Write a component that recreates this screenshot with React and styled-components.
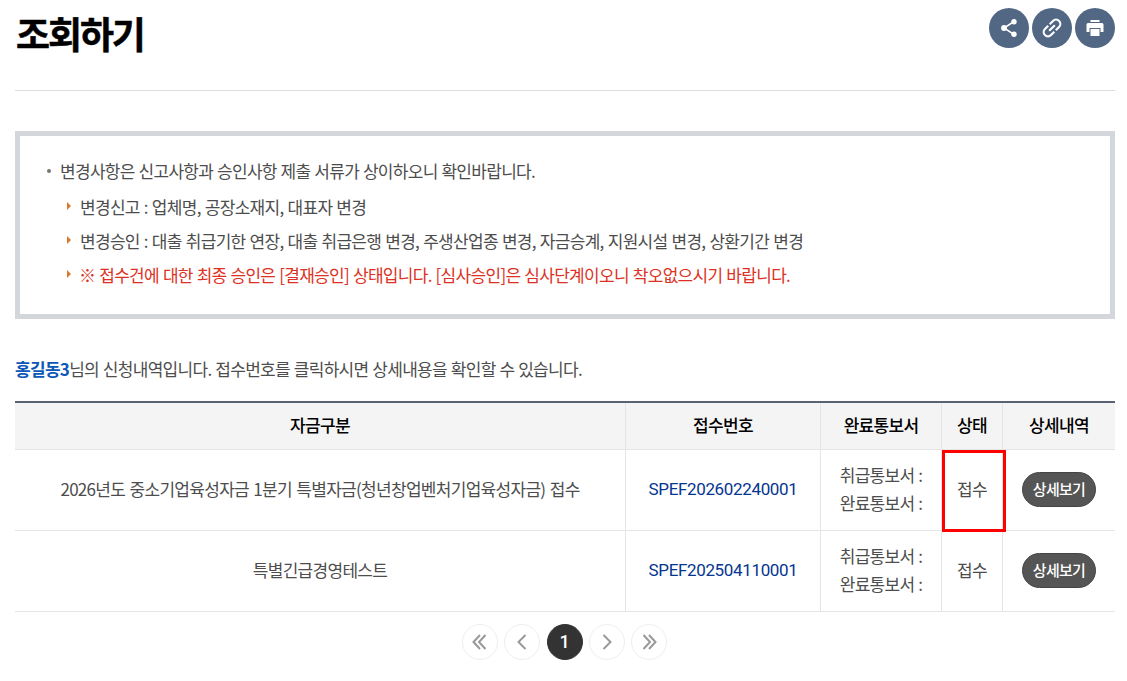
import React from "react";
import styled, { createGlobalStyle } from "styled-components";

const Global = createGlobalStyle`
  * { box-sizing: border-box; }
  body {
    margin: 0;
    background: #fff;
    color: #4d4d4d;
    font: 17px/34px "Noto Sans CJK KR", sans-serif;
    letter-spacing: -0.7px;
    word-spacing: 0.7px;
  }
  ul { list-style: none; margin: 0; padding: 0; }
`;

const Page = styled.main`
  width: 1127px;
  height: 681px;
  padding: 0 12px 0 15px;
  overflow: hidden;
`;
const Header = styled.header`
  display: flex;
  justify-content: space-between;
  align-items: flex-start;
  height: 91px;
  border-bottom: 1px solid #ddd;
`;
const Title = styled.h1`
  margin: 3px 0 0 1px;
  font-size: 37px;
  line-height: 60px;
  font-weight: 700;
  letter-spacing: -2.1px;
  -webkit-text-stroke: 0.5px #000;
  color: #000;
`;
const Tools = styled.div`
  display: flex;
  gap: 3px;
  padding-top: 8px;
`;
const Tool = styled.button`
  display: flex;
  align-items: center;
  justify-content: center;
  width: 40px;
  height: 40px;
  padding: 0;
  border: 0;
  border-radius: 50%;
  background: #526783;
  color: #fff;
`;
const Notice = styled.section`
  height: 188px;
  margin-top: 40px;
  padding: 18px 23px;
  border: 5px solid #d3d7dc;
`;
const NoticeLead = styled.p`
  display: flex;
  align-items: center;
  gap: 9px;
  margin: 0 0 2px 4px;
  &::before {
    content: "";
    width: 4px;
    height: 4px;
    border-radius: 50%;
    background: #777;
  }
`;
const NoticeItem = styled.li`
  display: flex;
  align-items: center;
  gap: ${(p) => (p.$alert ? 8 : 9)}px;
  padding-left: 24px;
  color: ${(p) => (p.$alert ? "#dc3224" : "inherit")};
  word-spacing: ${(p) => (p.$alert ? 0.8 : 0.93)}px;
  &::before {
    content: "";
    margin-top: -2px;
    border-left: 4px solid #d9792b;
    border-top: 4px solid transparent;
    border-bottom: 4px solid transparent;
  }
`;
const Intro = styled.p`
  margin: 33px 0 15px;
  strong { color: #0b58b8; font-weight: 700; }
`;
const Table = styled.div`
  border-top: 2px solid #596273;
`;
const Row = styled.div`
  display: grid;
  grid-template-columns: 611px 195px 121px 61px 112px;
  height: ${(p) => (p.$head ? 47 : 81)}px;
  border-bottom: 1px solid #e5e5e5;
  background: ${(p) => (p.$head ? "#f4f4f4" : "#fff")};
  color: ${(p) => (p.$head ? "#000" : "inherit")};
  font-weight: ${(p) => (p.$head ? 500 : 400)};
`;
const Cell = styled.div`
  position: relative;
  display: flex;
  align-items: center;
  justify-content: center;
  padding-bottom: 2px;
  border-right: 1px solid #e5e5e5;
  line-height: 28px;
  &:last-child { border-right: 0; }
`;
const Fund = styled.span`
  word-spacing: 1.2px;
`;
const Receipt = styled.a`
  color: #043590;
  font-family: Roboto, sans-serif;
  letter-spacing: -0.35px;
`;
const Highlight = styled.span`
  position: absolute;
  z-index: 1;
  left: 0;
  top: 0;
  width: 64px;
  height: 82px;
  border: 3px solid #f00;
`;
const DetailButton = styled.button`
  width: 74px;
  height: 35px;
  padding: 0 0 1px;
  border: 1px solid #444;
  border-radius: 18px;
  background: #555;
  color: #fff;
  font: 500 15px/32px "Noto Sans CJK KR", sans-serif;
  letter-spacing: -0.7px;
`;
const Pager = styled.nav`
  display: flex;
  justify-content: center;
  gap: 6px;
  padding: 12px 2px 0 0;
`;
const PageButton = styled.button`
  display: flex;
  align-items: center;
  justify-content: center;
  width: 36px;
  height: 36px;
  padding: 0;
  border: 1px solid ${(p) => (p.$current ? "#333" : "#eee")};
  border-radius: 50%;
  margin-left: ${(p) => (p.$current ? 1 : 0)}px;
  background: ${(p) => (p.$current ? "#333" : "#fff")};
  color: ${(p) => (p.$current ? "#fff" : "#999")};
  font: 500 18px/34px Roboto, sans-serif;
`;

const ShareIcon = () => (
  <svg width="18" height="20" viewBox="0 0 18 20">
    <path d="M14 3.500 4 10l10 6.500" fill="none" stroke="currentColor" strokeWidth="1.5" />
    <g fill="currentColor"><circle cx="14" cy="3.700" r="2.700" /><circle cx="4" cy="10" r="2.900" /><circle cx="14" cy="16.300" r="2.700" /></g>
  </svg>
);
const LinkIcon = () => (
  <svg width="24" height="24" viewBox="0 0 24 24" fill="none" stroke="currentColor" strokeWidth="2.1">
    <g transform="rotate(-45 12 12)">
      <path d="M11 7.700H6.300a4.300 4.300 0 0 0 0 8.600H11M13 7.700h4.700a4.300 4.300 0 0 1 0 8.600H13M8 12h8" />
    </g>
  </svg>
);
const PrintIcon = () => (
  <svg width="19" height="18" viewBox="0 0 19 18">
    <path d="M4.500 1h9v2h-9zM2 4h14a1.500 1.500 0 0 1 1.500 1.500V13h-3V9h-11v4h-3V5.500A1.500 1.500 0 0 1 2 4zM4.500 10h9v7h-9z" fill="currentColor" />
  </svg>
);
const Chevrons = ({ d }) => (
  <svg width="18" height="18" viewBox="0 0 18 18" fill="none" stroke="currentColor" strokeWidth="2">
    <path d={d} />
  </svg>
);

const headings = ["자금구분", "접수번호", "완료통보서", "상태", "상세내역"];
const rows = [
  { fund: "2026년도 중소기업육성자금 1분기 특별자금(청년창업벤처기업육성자금) 접수", no: "SPEF202602240001", marked: true },
  { fund: "특별긴급경영테스트", no: "SPEF202504110001" },
];

export default function App() {
  return (
    <Page>
      <Global />
      <Header>
        <Title>조회하기</Title>
        <Tools>
          <Tool aria-label="공유"><ShareIcon /></Tool>
          <Tool aria-label="링크"><LinkIcon /></Tool>
          <Tool aria-label="인쇄"><PrintIcon /></Tool>
        </Tools>
      </Header>
      <Notice>
        <NoticeLead>변경사항은 신고사항과 승인사항 제출 서류가 상이하오니 확인바랍니다.</NoticeLead>
        <ul>
          <NoticeItem>변경신고 : 업체명, 공장소재지, 대표자 변경</NoticeItem>
          <NoticeItem>변경승인 : 대출 취급기한 연장, 대출 취급은행 변경, 주생산업종 변경, 자금승계, 지원시설 변경, 상환기간 변경</NoticeItem>
          <NoticeItem $alert>※ 접수건에 대한 최종 승인은 [결재승인] 상태입니다. [심사승인]은 심사단계이오니 착오없으시기 바랍니다.</NoticeItem>
        </ul>
      </Notice>
      <Intro><strong>홍길동3</strong>님의 신청내역입니다. 접수번호를 클릭하시면 상세내용을 확인할 수 있습니다.</Intro>
      <Table>
        <Row $head>{headings.map((h) => <Cell key={h}>{h}</Cell>)}</Row>
        {rows.map((r) => (
          <Row key={r.no}>
            <Cell><Fund>{r.fund}</Fund></Cell>
            <Cell><Receipt>{r.no}</Receipt></Cell>
            <Cell>취급통보서 :<br />완료통보서 :</Cell>
            <Cell>접수{r.marked && <Highlight />}</Cell>
            <Cell><DetailButton>상세보기</DetailButton></Cell>
          </Row>
        ))}
      </Table>
      <Pager>
        <PageButton aria-label="처음"><Chevrons d="M9 2 2.500 9 9 16M14.500 2 8 9l6.500 7" /></PageButton>
        <PageButton aria-label="이전"><Chevrons d="M12.500 2 5.500 9l7 7" /></PageButton>
        <PageButton $current>1</PageButton>
        <PageButton aria-label="다음"><Chevrons d="M5.500 2l7 7-7 7" /></PageButton>
        <PageButton aria-label="마지막"><Chevrons d="M3.500 2 10 9l-6.500 7M9 2l6.500 7L9 16" /></PageButton>
      </Pager>
    </Page>
  );
}
